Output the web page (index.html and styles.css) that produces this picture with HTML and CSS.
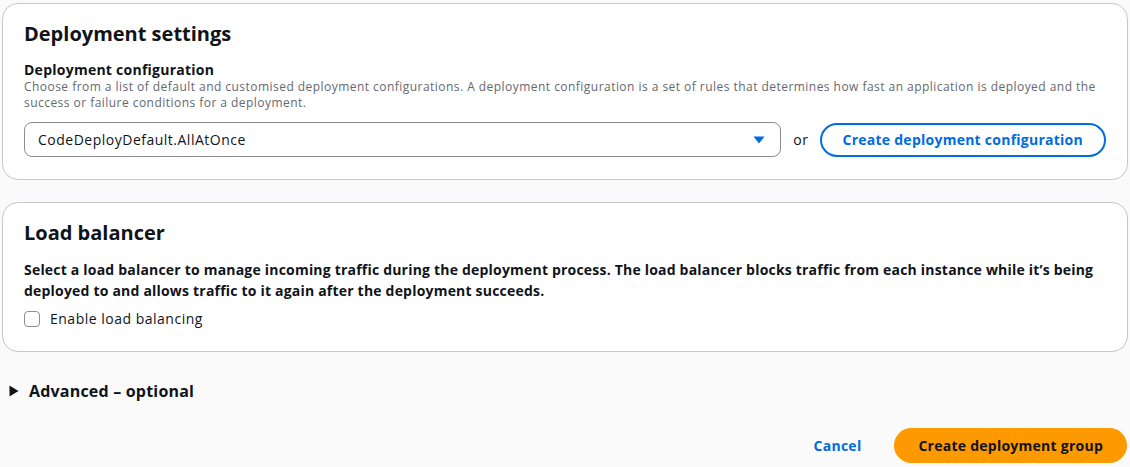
FILE: index.html
```html
<!DOCTYPE html>
<html lang="en">
<head>
<meta charset="utf-8">
<title>Create deployment group</title>
<link rel="stylesheet" href="styles.css">
</head>
<body>
<main class="page">
  <section class="card">
    <h2 class="card-title">Deployment settings</h2>
    <div class="field">
      <div class="field-label">Deployment configuration</div>
      <p class="field-desc">Choose from a list of default and customised deployment configurations. A deployment configuration is a set of rules that determines how fast an application is deployed and the success or failure conditions for a deployment.</p>
      <div class="select-row">
        <div class="select">
          <span class="select-value">CodeDeployDefault.AllAtOnce</span>
          <svg class="caret" width="12" height="8" viewBox="0 0 12 8" aria-hidden="true"><path d="M0.5 0.5h11L6 7.5z" fill="#006ce0"/></svg>
        </div>
        <span class="or">or</span>
        <button class="btn-outline" type="button">Create deployment configuration</button>
      </div>
    </div>
  </section>

  <section class="card">
    <h2 class="card-title">Load balancer</h2>
    <p class="lb-desc">Select a load balancer to manage incoming traffic during the deployment process. The load balancer blocks traffic from each instance while it’s being deployed to and allows traffic to it again after the deployment succeeds.</p>
    <label class="check">
      <span class="check-box"></span>
      <span class="check-label">Enable load balancing</span>
    </label>
  </section>

  <div class="expander">
    <svg class="expander-icon" width="10" height="12" viewBox="0 0 10 12" aria-hidden="true"><path d="M0.5 0.5L9.5 6L0.5 11.5z" fill="#0f141a"/></svg>
    <span class="expander-title">Advanced – optional</span>
  </div>

  <div class="actions">
    <button class="btn-link" type="button">Cancel</button>
    <button class="btn-primary" type="button">Create deployment group</button>
  </div>
</main>
</body>
</html>
```

FILE: styles.css
```css
* {
  box-sizing: border-box;
}

body {
  margin: 0;
  background: #fafafa;
  color: #0f141a;
  font-family: "Open Sans", "Noto Sans", sans-serif;
}

.page {
  display: flex;
  flex-direction: column;
  padding: 3px 2px 0 2px;
}

.card {
  background: #ffffff;
  border: 1px solid #c6c6cd;
  border-radius: 16px;
  padding: 18px 21px 22px 21px;
  margin-bottom: 22px;
}

.card-title {
  margin: 0;
  font-size: 20px;
  line-height: 24px;
  font-weight: 700;
}

.field {
  margin-top: 15px;
}

.field-label {
  font-size: 14px;
  line-height: 18px;
  font-weight: 700;
  letter-spacing: 0.25px;
}

.field-desc {
  margin: 0 0 11px 0;
  font-size: 12px;
  line-height: 16px;
  letter-spacing: 0.46px;
  color: #656871;
}

.select-row {
  display: flex;
  align-items: center;
}

.select {
  flex: 1;
  height: 35px;
  border: 1px solid #8c8c94;
  border-radius: 8px;
  display: flex;
  align-items: center;
  justify-content: space-between;
  padding: 0 15px 0 13px;
  font-size: 14px;
  letter-spacing: 0.5px;
}

.or {
  margin: 0 11px 0 12px;
  font-size: 14px;
  letter-spacing: 0.5px;
}

.btn-outline {
  height: 34px;
  padding: 0 21px;
  border: 2px solid #006ce0;
  border-radius: 20px;
  background: #ffffff;
  color: #006ce0;
  font: 700 14px/20px "Open Sans", "Noto Sans", sans-serif;
  letter-spacing: 0.25px;
}

.lb-desc {
  margin: 14px 0 0 0;
  font-size: 14px;
  line-height: 21px;
  font-weight: 700;
  letter-spacing: 0.2px;
}

.check {
  display: flex;
  align-items: center;
  gap: 10px;
  margin-top: 8px;
  font-size: 14px;
  line-height: 20px;
  letter-spacing: 0.5px;
}

.check-box {
  width: 16px;
  height: 16px;
  border: 1px solid #8c8c94;
  border-radius: 4px;
  background: #ffffff;
}

.expander {
  display: flex;
  align-items: center;
  gap: 10px;
  padding: 7px 0 0 7px;
}

.expander-title {
  font-size: 16px;
  line-height: 20px;
  font-weight: 700;
  letter-spacing: 0.2px;
}

.actions {
  display: flex;
  justify-content: flex-end;
  align-items: center;
  gap: 33px;
  margin-top: 27px;
  padding-right: 1px;
}

.btn-link {
  border: 0;
  background: none;
  padding: 0;
  color: #006ce0;
  font: 700 14px/20px "Open Sans", "Noto Sans", sans-serif;
  letter-spacing: 0.25px;
}

.btn-primary {
  height: 35px;
  padding: 0 24px;
  border: 0;
  border-radius: 20px;
  background: #ff9900;
  color: #0f141a;
  font: 700 14px/20px "Open Sans", "Noto Sans", sans-serif;
  letter-spacing: 0.25px;
}
```
